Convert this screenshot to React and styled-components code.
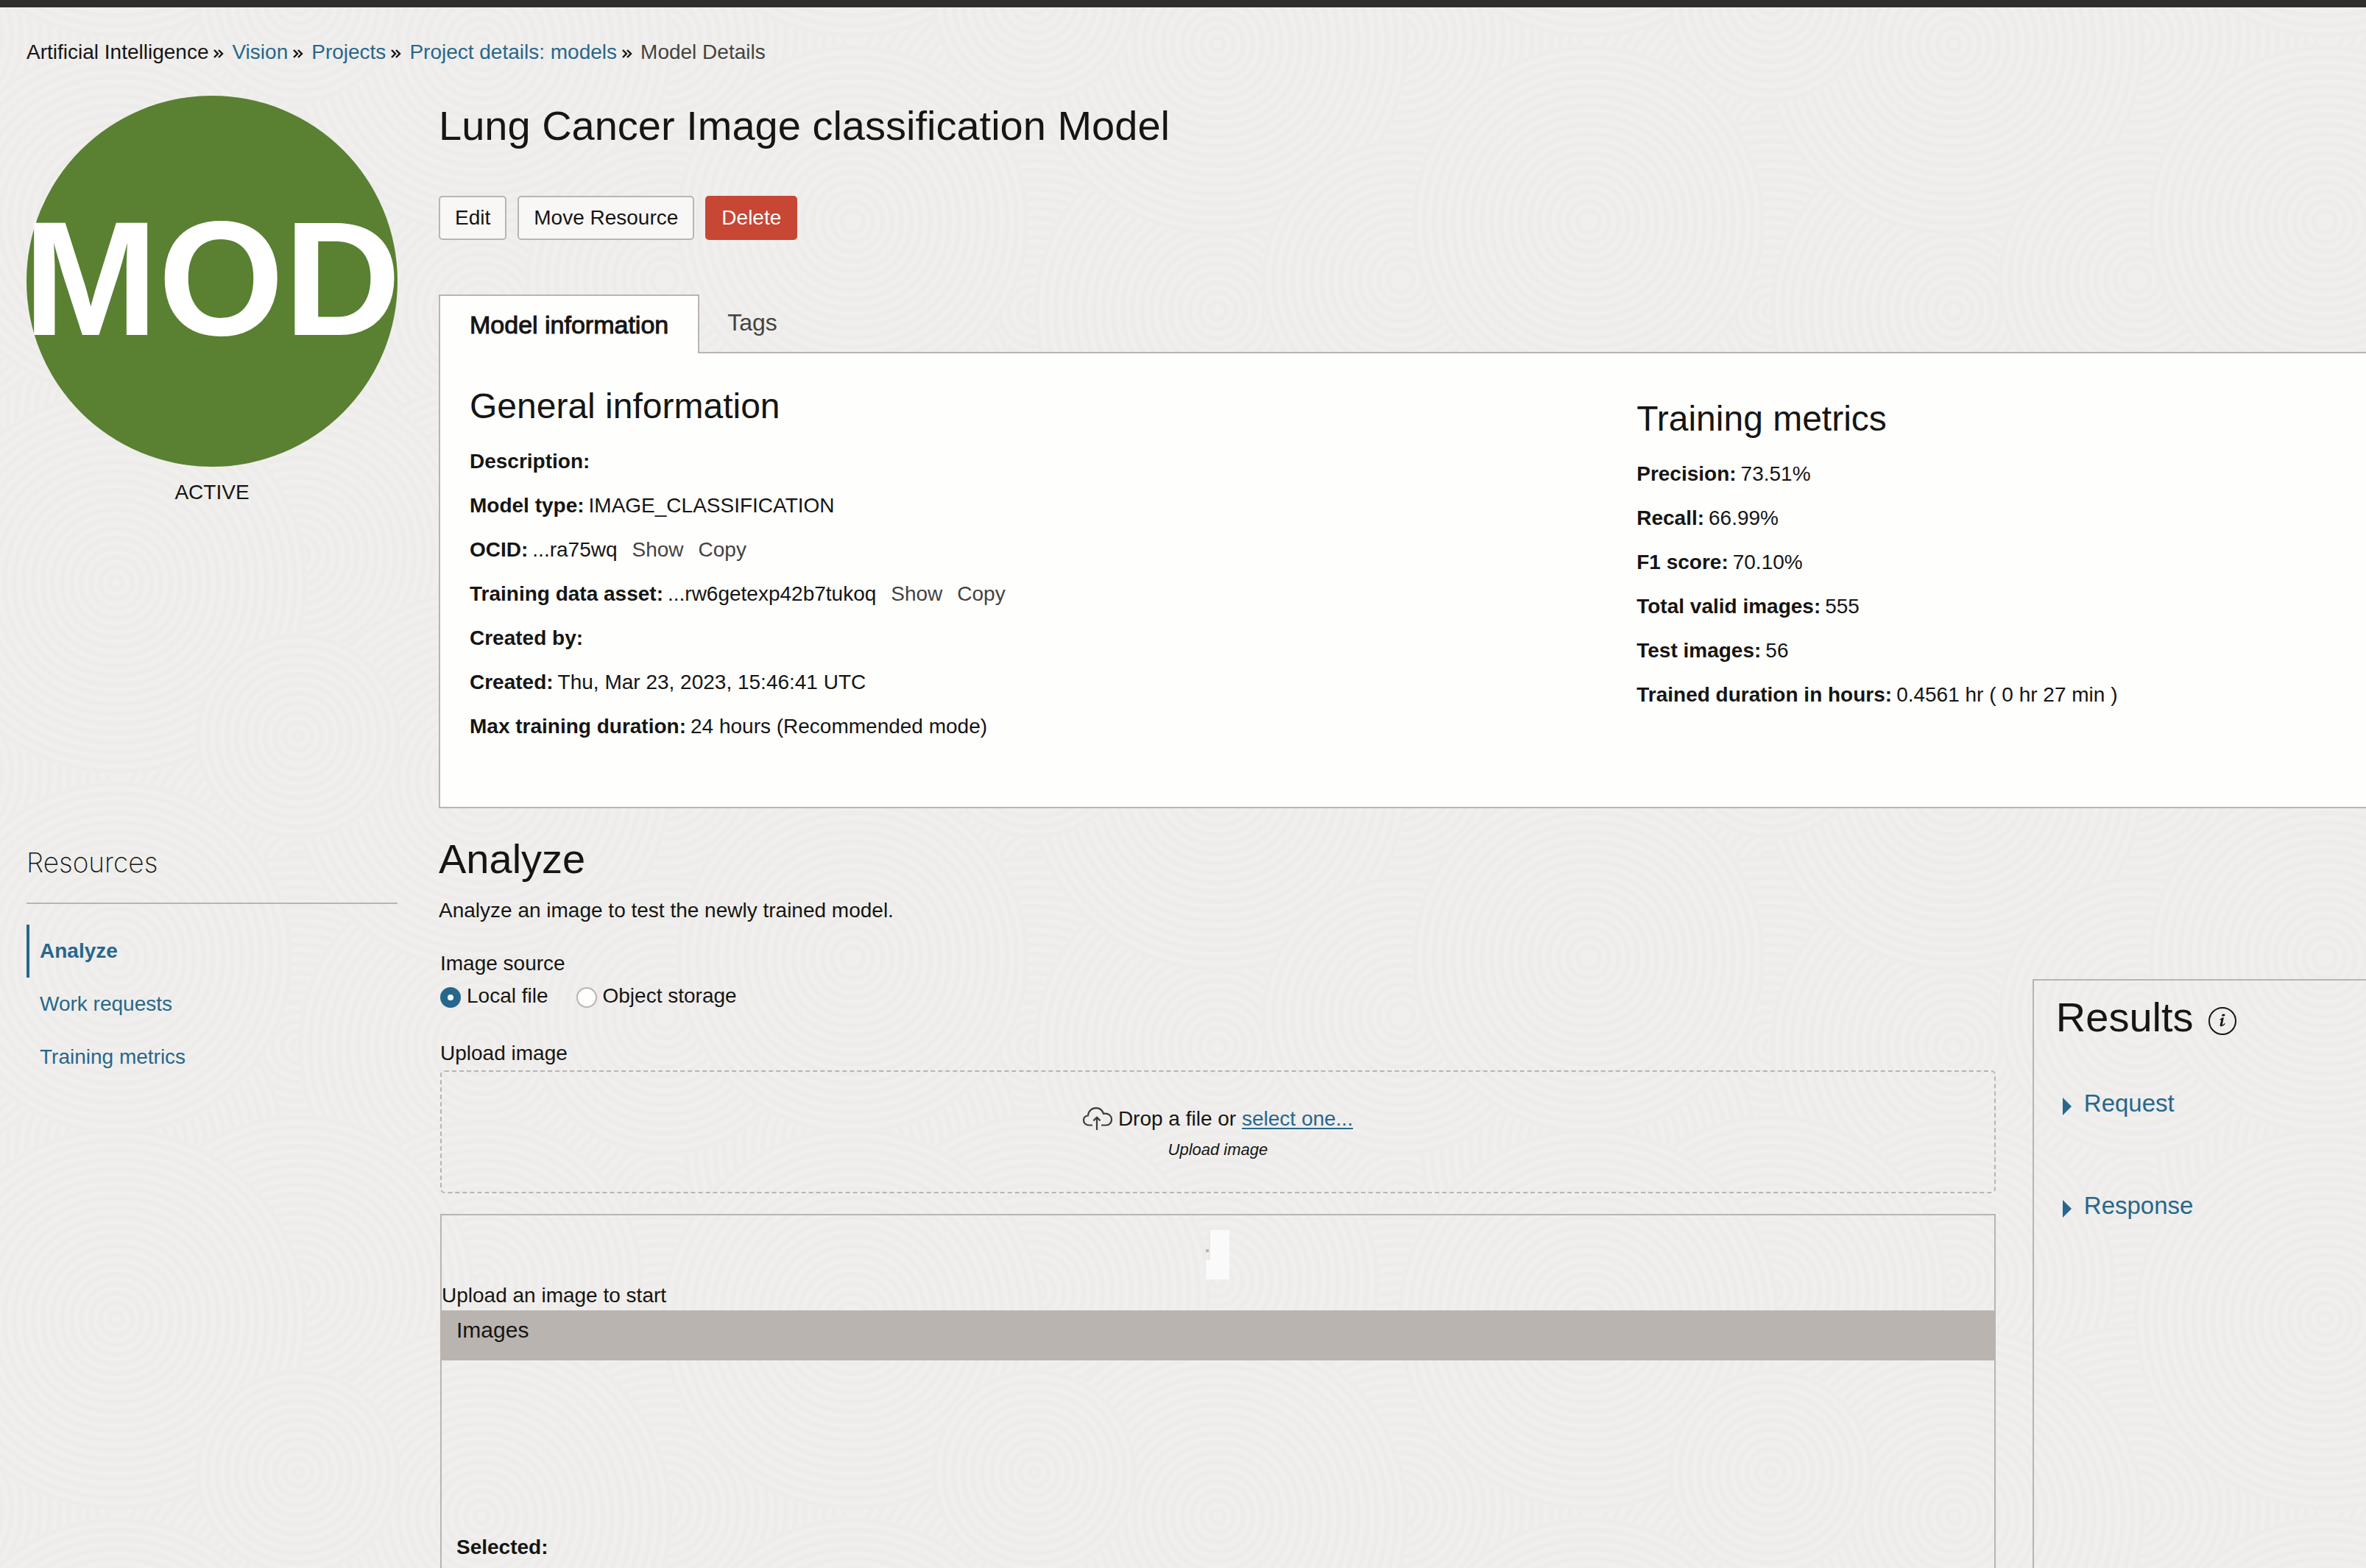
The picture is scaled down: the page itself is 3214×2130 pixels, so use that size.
import React, { useState } from "react";
import styled, { createGlobalStyle, css } from "styled-components";

const ink = "#161513";
const muted = "#45423f";
const link = "#27678c";
const line = "#bab4b0";
const paper = "#fefefd";

/* Background texture: overlapping discs of concentric rings on a repeating tile. */
const TILE = 1000;
const DISCS = [
  [405, 180, 260],
  [903, 640, 260],
  [405, 422, 260],
  [903, 875, 240],
  [654, 422, 250],
  [654, 740, 220],
  [158, 560, 230],
  [900, 50, 250],
  [405, 754, 240],
  [654, 60, 260],
  [903, 380, 190],
  [158, 301, 240],
  [158, 792, 260],
  [405, 1000, 140],
];

function textureUrl() {
  let body = "";
  DISCS.forEach(([cx, cy, r]) => {
    [-TILE, 0, TILE].forEach((dx) => {
      [-TILE, 0, TILE].forEach((dy) => {
        const x = cx + dx;
        const y = cy + dy;
        if (x + r < 0 || x - r > TILE || y + r < 0 || y - r > TILE) return;
        body += `<circle cx='${x}' cy='${y}' r='${r}' fill='#f0efed' stroke='none'/>`;
        for (let k = r - 4; k > 4; k -= 13) {
          body += `<circle cx='${x}' cy='${y}' r='${k}'/>`;
        }
      });
    });
  });
  const svg = `<svg xmlns='http://www.w3.org/2000/svg' width='${TILE}' height='${TILE}'><g fill='none' stroke='#edecea' stroke-width='6'>${body}</g></svg>`;
  return `url("data:image/svg+xml,${encodeURIComponent(svg).replace(/'/g, "%27")}")`;
}

const GlobalStyle = createGlobalStyle`
  *, *::before, *::after { box-sizing: border-box; }
  body {
    margin: 0;
    background: #f0efed ${textureUrl()};
    color: ${ink};
    font-family: "Liberation Sans", Arial, sans-serif;
    font-size: 28px;
    line-height: 40px;
    overflow-x: hidden;
  }
  h1, h2, h3, p, ul, ol, dl, dd, fieldset, legend { margin: 0; padding: 0; border: 0; }
  ul, ol { list-style: none; }
  a { color: ${link}; text-decoration: none; }
  button { font: inherit; cursor: pointer; }
`;

const Page = styled.div`
  display: flex;
  flex-direction: column;
  min-height: 100vh;
`;

const TopBar = styled.header`
  height: 10px;
  background: #312d2a;
`;

const Breadcrumbs = styled.ol`
  display: flex;
  align-items: center;
  padding: 41px 36px 0;
`;

const Crumb = styled.li`
  display: flex;
  align-items: center;
  color: ${(p) => (p.$current ? muted : ink)};
`;

const ChevronMark = styled.svg`
  width: 14px;
  height: 12px;
  margin: 4px 11px 0 7px;
  fill: none;
  stroke: ${ink};
  stroke-width: 2.4;
`;

const Layout = styled.div`
  flex: 1;
  display: grid;
  grid-template-columns: 504px minmax(0, 1fr);
  gap: 56px;
  padding: 39px 0 0 36px;
`;

const Sidebar = styled.aside`
  display: flex;
  flex-direction: column;
`;

const StatusBadge = styled.div`
  display: flex;
  align-items: center;
  justify-content: center;
  width: 100%;
  aspect-ratio: 1;
  padding-bottom: 6px;
  border-radius: 50%;
  background: #5a8032;
  color: #fff;
  font-size: 220px;
  font-weight: 700;
  line-height: 252px;
`;

const StatusText = styled.p`
  margin-top: 15px;
  text-align: center;
`;

const ResourcesTitle = styled.h2`
  margin-top: 455px;
  padding-bottom: 26px;
  border-bottom: 2px solid ${line};
  font-family: Inter, "Liberation Sans", sans-serif;
  font-size: 37px;
  font-weight: 200;
  line-height: 56px;
`;

const ResourceNav = styled.ul`
  margin-top: 28px;
`;

const ResourceLink = styled.a`
  display: block;
  padding-left: 14px;
  border-left: 4px solid ${(p) => (p.$active ? link : "transparent")};
  font-weight: ${(p) => (p.$active ? 700 : 400)};
  line-height: 72px;
`;

const Main = styled.main`
  display: flex;
  flex-direction: column;
`;

const Heading = styled.h1`
  font-size: 56px;
  font-weight: 400;
  line-height: 64px;
`;

const PageTitle = styled(Heading)`
  margin-top: 9px;
`;

const Toolbar = styled.div`
  display: flex;
  gap: 15px;
  margin-top: 63px;
`;

const Button = styled.button`
  height: 60px;
  padding: 0 20px;
  border: 2px solid ${line};
  border-radius: 5px;
  background: #f8f7f5;
  color: ${ink};
  ${(p) =>
    p.$danger &&
    css`
      border-color: #c74634;
      background: #c74634;
      color: #fff;
    `}
`;

const TabList = styled.div`
  display: flex;
  height: 80px;
  margin-top: 74px;
  z-index: 1;
`;

const Tab = styled.button`
  padding: 0 38px 4px;
  border: 0;
  background: none;
  color: ${muted};
  font-size: 32px;
  ${(p) =>
    p.$active &&
    css`
      padding: 0 40px;
      border: 2px solid ${line};
      border-bottom: 0;
      background: ${paper};
      color: ${ink};
      font-size: 34px;
      -webkit-text-stroke: 1px ${ink};
    `}
`;

const Panel = styled.section`
  display: grid;
  grid-template-columns: minmax(0, 8fr) minmax(0, 5fr);
  margin-top: -2px;
  padding: 44px 0 79px 40px;
  border: 2px solid ${line};
  border-right: 0;
  background: ${paper};
`;

const PanelColumn = styled.div`
  padding-top: ${(p) => (p.$lowered ? 17 : 0)}px;
`;

const PanelTitle = styled.h2`
  margin-bottom: 17px;
  font-size: 48px;
  font-weight: 400;
  line-height: 56px;
`;

const Facts = styled.dl`
  line-height: 60px;
`;

const Fact = styled.div`
  display: flex;
  gap: 6px;
`;

const FactName = styled.dt`
  font-weight: 700;
`;

const FactValue = styled.dd`
  display: flex;
  gap: 20px;
`;

const TextButton = styled.button`
  padding: 0;
  border: 0;
  background: none;
  color: ${muted};
`;

const AnalyzeHeader = styled.div`
  display: flex;
  flex-direction: column;
  gap: 18px;
  margin-top: 37px;
`;

const Workspace = styled.div`
  flex: 1;
  display: grid;
  grid-template-columns: minmax(0, 14fr) minmax(0, 3fr);
  gap: 50px;
`;

const AnalyzeForm = styled.form`
  display: flex;
  flex-direction: column;
  padding: 32px 0 0 2px;
`;

const RadioRow = styled.div`
  display: flex;
  gap: 38px;
  margin-top: 4px;
`;

const RadioLabel = styled.label`
  display: flex;
  align-items: center;
  gap: 8px;
`;

const Radio = styled.input`
  appearance: none;
  width: 28px;
  height: 28px;
  margin: 3px 0 0;
  border: 2px solid ${line};
  border-radius: 50%;
  background: ${paper};
  &:checked {
    border: 10px solid ${link};
  }
`;

const UploadLabel = styled.label`
  margin-top: 38px;
`;

const DropZone = styled.div`
  display: flex;
  flex-direction: column;
  align-items: center;
  min-height: 167px;
  margin-top: 3px;
  padding-top: 44px;
  border: 2px dashed ${line};
  border-radius: 6px;
`;

const DropPrompt = styled.p`
  display: flex;
  align-items: center;
  gap: 8px;
`;

const CloudIcon = styled.svg`
  width: 40px;
  height: 32px;
  fill: none;
  stroke: #3f3c39;
  stroke-width: 2.2;
`;

const SelectLink = styled.a`
  text-decoration: underline;
  text-decoration-thickness: 2px;
  text-underline-offset: 3px;
`;

const DropHint = styled.p`
  margin-top: 7px;
  font-size: 22px;
  font-style: italic;
  line-height: 30px;
`;

const HiddenFile = styled.input`
  position: absolute;
  width: 1px;
  height: 1px;
  opacity: 0;
  pointer-events: none;
`;

const Preview = styled.section`
  flex: 1;
  margin-top: 28px;
  border: 2px solid ${line};
  border-bottom: 0;
`;

const EmptyCanvas = styled.svg`
  display: block;
  width: 32px;
  height: 67px;
  margin: 20px auto 2px;
`;

const ImagesBar = styled.h3`
  padding: 7px 20px 21px;
  background: ${line};
  font-size: 30px;
  font-weight: 400;
  line-height: 40px;
`;

const ImageStrip = styled.div`
  min-height: 234px;
`;

const Selected = styled.p`
  padding: 0 20px;
  font-weight: 700;
`;

const Results = styled.section`
  margin-top: 73px;
  padding: 18px 30px;
  border: 2px solid ${line};
  border-width: 2px 0 0 2px;
`;

const ResultsHeader = styled.div`
  display: flex;
  align-items: center;
  gap: 20px;
`;

const InfoIcon = styled.svg`
  width: 38px;
  height: 38px;
  margin-top: 9px;
`;

const Disclosures = styled.div`
  display: flex;
  flex-direction: column;
  align-items: flex-start;
  gap: 99px;
  padding: 65px 0 0 9px;
`;

const Disclosure = styled.button`
  display: flex;
  align-items: center;
  gap: 17px;
  padding: 0;
  border: 0;
  background: none;
  color: ${link};
  font-size: 33px;
  line-height: 40px;
`;

const Caret = styled.svg`
  width: 12px;
  height: 24px;
  margin-top: 8px;
  fill: ${link};
`;

const GENERAL = [
  ["Description:", ""],
  ["Model type:", "IMAGE_CLASSIFICATION"],
  ["OCID:", "...ra75wq", true],
  ["Training data asset:", "...rw6getexp42b7tukoq", true],
  ["Created by:", ""],
  ["Created:", "Thu, Mar 23, 2023, 15:46:41 UTC"],
  ["Max training duration:", "24 hours (Recommended mode)"],
];

const METRICS = [
  ["Precision:", "73.51%"],
  ["Recall:", "66.99%"],
  ["F1 score:", "70.10%"],
  ["Total valid images:", "555"],
  ["Test images:", "56"],
  ["Trained duration in hours:", "0.4561 hr ( 0 hr 27 min )"],
];

const CRUMBS = [
  { text: "Artificial Intelligence" },
  { text: "Vision", href: "#vision" },
  { text: "Projects", href: "#projects" },
  { text: "Project details: models", href: "#models" },
  { text: "Model Details", current: true },
];

const RESOURCES = ["Analyze", "Work requests", "Training metrics"];

function FactList({ items }) {
  return (
    <Facts>
      {items.map(([name, value, actions]) => (
        <Fact key={name}>
          <FactName>{name}</FactName>
          <FactValue>
            {value}
            {actions && <TextButton type="button">Show</TextButton>}
            {actions && <TextButton type="button">Copy</TextButton>}
          </FactValue>
        </Fact>
      ))}
    </Facts>
  );
}

export default function App() {
  const [source, setSource] = useState("local");
  return (
    <Page>
      <GlobalStyle />
      <TopBar />
      <nav aria-label="Breadcrumb">
        <Breadcrumbs>
          {CRUMBS.map((c) => (
            <Crumb key={c.text} $current={c.current}>
              {c.href ? <a href={c.href}>{c.text}</a> : c.text}
              {!c.current && (
                <ChevronMark viewBox="0 0 14 12" aria-hidden="true">
                  <path d="M1 1 L6 6 L1 11 M7 1 L12 6 L7 11" />
                </ChevronMark>
              )}
            </Crumb>
          ))}
        </Breadcrumbs>
      </nav>
      <Layout>
        <Sidebar>
          <StatusBadge>MOD</StatusBadge>
          <StatusText>ACTIVE</StatusText>
          <ResourcesTitle>Resources</ResourcesTitle>
          <ResourceNav>
            {RESOURCES.map((name, i) => (
              <li key={name}>
                <ResourceLink href={`#resource-${i}`} $active={i === 0}>
                  {name}
                </ResourceLink>
              </li>
            ))}
          </ResourceNav>
        </Sidebar>
        <Main>
          <PageTitle>Lung Cancer Image classification Model</PageTitle>
          <Toolbar>
            <Button type="button">Edit</Button>
            <Button type="button">Move Resource</Button>
            <Button type="button" $danger>
              Delete
            </Button>
          </Toolbar>
          <TabList role="tablist">
            <Tab type="button" role="tab" aria-selected="true" $active>
              Model information
            </Tab>
            <Tab type="button" role="tab" aria-selected="false">
              Tags
            </Tab>
          </TabList>
          <Panel role="tabpanel">
            <PanelColumn>
              <PanelTitle>General information</PanelTitle>
              <FactList items={GENERAL} />
            </PanelColumn>
            <PanelColumn $lowered>
              <PanelTitle>Training metrics</PanelTitle>
              <FactList items={METRICS} />
            </PanelColumn>
          </Panel>
          <AnalyzeHeader>
            <Heading as="h2">Analyze</Heading>
            <p>Analyze an image to test the newly trained model.</p>
          </AnalyzeHeader>
          <Workspace>
            <AnalyzeForm>
              <fieldset>
                <legend>Image source</legend>
                <RadioRow>
                  <RadioLabel>
                    <Radio
                      type="radio"
                      name="source"
                      checked={source === "local"}
                      onChange={() => setSource("local")}
                    />
                    Local file
                  </RadioLabel>
                  <RadioLabel>
                    <Radio
                      type="radio"
                      name="source"
                      checked={source === "object"}
                      onChange={() => setSource("object")}
                    />
                    Object storage
                  </RadioLabel>
                </RadioRow>
              </fieldset>
              <UploadLabel htmlFor="upload">Upload image</UploadLabel>
              <DropZone>
                <DropPrompt>
                  <CloudIcon viewBox="0 0 40 32" aria-hidden="true">
                    <path d="M13 24.5 H8.5 C4 24.5 1 21.5 1 17.8 C1 14.2 3.6 11.6 7 11.4 C7.4 5.4 12 1.2 17.8 1.2 C22.5 1.2 26.4 4.2 28 8.8 C34.5 7.6 39 11.6 39 16.8 C39 21.2 35.8 24.5 31.5 24.5 H25" />
                    <path d="M19 31 V14 M14.4 18.4 L19 13.8 L23.6 18.4" />
                  </CloudIcon>
                  <span>
                    Drop a file or <SelectLink href="#upload">select one...</SelectLink>
                  </span>
                  <HiddenFile id="upload" type="file" tabIndex={-1} />
                </DropPrompt>
                <DropHint>Upload image</DropHint>
              </DropZone>
              <Preview>
                <EmptyCanvas viewBox="0 0 32 67" aria-hidden="true">
                  <path d="M6 0 H32 V67 H0 V41 H6 Z" fill="#fafafa" />
                  <path d="M4 0 H6 V41 H4 Z" fill="#e8e8e8" />
                  <path d="M0 26 H4 V30 H0 Z" fill={line} />
                </EmptyCanvas>
                <p>Upload an image to start</p>
                <ImagesBar>Images</ImagesBar>
                <ImageStrip />
                <Selected>Selected:</Selected>
              </Preview>
            </AnalyzeForm>
            <Results>
              <ResultsHeader>
                <Heading as="h2">Results</Heading>
                <InfoIcon viewBox="0 0 38 38" role="img" aria-label="About results">
                  <circle cx="19" cy="19" r="18" fill="none" stroke={ink} strokeWidth="2" />
                  <ellipse cx="20.3" cy="11" rx="2.3" ry="1.5" fill={ink} transform="rotate(-15 20.3 11)" />
                  <path
                    d="M15.6 17.2 C17 16.6 18 15.8 19.8 15.2 L17.6 24.4 C17.5 25.8 20.2 25.2 22.4 22.4"
                    fill="none"
                    stroke={ink}
                    strokeWidth="1.4"
                  />
                  <path d="M19 16 L17 25" stroke={ink} strokeWidth="2.8" strokeLinecap="round" />
                </InfoIcon>
              </ResultsHeader>
              <Disclosures>
                {["Request", "Response"].map((name) => (
                  <Disclosure key={name} type="button" aria-expanded="false">
                    <Caret viewBox="0 0 12 24" aria-hidden="true">
                      <path d="M0 0 L12 12 L0 24 Z" />
                    </Caret>
                    {name}
                  </Disclosure>
                ))}
              </Disclosures>
            </Results>
          </Workspace>
        </Main>
      </Layout>
    </Page>
  );
}
